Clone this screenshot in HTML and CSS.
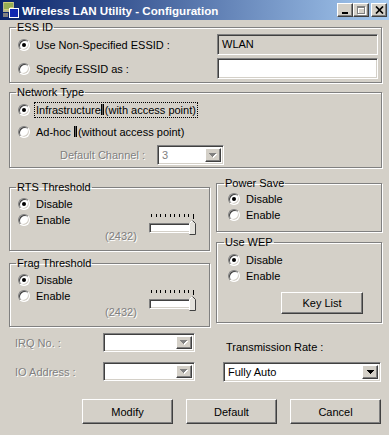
FILE: index.html
```html
<html>
<head>
  <title>Wireless LAN Utility - Configuration</title>
  <meta charset="UTF-8">
  <link rel="stylesheet" href="styles.css">
</head>
<body>
  <div class="titlebar">
    <svg class="app-icon" viewBox="0 0 16 16" width="16" height="16">
      <rect x="0" y="0" width="11" height="10" fill="#b8b890"/>
      <path d="M1 1h9M1 3h9M1 5h9M1 7h6" stroke="#e8e860" stroke-width="1"/>
      <path d="M1 2h9M1 4h9M1 6h6" stroke="#5a8a30" stroke-width="1"/>
      <rect x="6" y="6" width="10" height="10" fill="#fff"/>
      <rect x="7" y="7" width="8" height="8" fill="#1028b0"/>
      <rect x="0" y="11" width="5" height="4" fill="#808080"/>
    </svg>
    <span class="title">Wireless LAN Utility - Configuration</span>
    <div class="caption">
      <span class="cap-btn raised">
        <svg width="8" height="7"><rect x="1" y="5" width="6" height="2" fill="#000"/></svg>
      </span>
      <span class="cap-btn raised">
        <svg width="10" height="10">
          <path d="M2 2h8v8h-8z M3 4v5h6v-5z" fill="#fff" fill-rule="evenodd"/>
          <path d="M1 1h8v8h-8z M2 3v5h6v-5z" fill="#808080" fill-rule="evenodd"/>
        </svg>
      </span>
      <span class="cap-btn raised close">
        <svg width="9" height="8"><path d="M1 0.5L8 7.5M8 0.5L1 7.5" stroke="#000" stroke-width="1.7"/></svg>
      </span>
    </div>
  </div>

  <div class="content">
    <fieldset class="group ess">
      <legend>ESS ID</legend>
      <div class="ess-row">
        <label class="opt"><span class="radio on"></span>Use Non-Specified ESSID :</label>
        <div class="field readonly">WLAN</div>
      </div>
      <div class="ess-row">
        <label class="opt"><span class="radio"></span>Specify ESSID as :</label>
        <div class="field"></div>
      </div>
    </fieldset>

    <fieldset class="group net">
      <legend>Network Type</legend>
      <div class="net-row">
        <label class="opt"><span class="radio on"></span><span class="focus">Infrastructure<span class="tab"></span>(with access point)</span></label>
      </div>
      <div class="net-row">
        <label class="opt"><span class="radio"></span><span>Ad-hoc <span class="tab"></span>(without access point)</span></label>
      </div>
      <div class="chan-row">
        <span class="lbl dis">Default Channel :</span>
        <div class="combo chan">
          <span class="combo-text dis">3</span>
          <span class="drop raised">
            <svg width="8" height="5"><path d="M1 1h7v1h-1v1h-1v1h-1v1h-1v-1h-1v-1h-1v-1h-1z" fill="#fff"/><path d="M0 0h7v1h-1v1h-1v1h-1v1h-1v-1h-1v-1h-1v-1h-1z" fill="#808080"/></svg>
          </span>
        </div>
      </div>
    </fieldset>

    <div class="cols">
      <div class="col-left">
        <fieldset class="group thresh rts">
          <legend>RTS Threshold</legend>
          <div class="thresh-grid">
            <label class="opt r1"><span class="radio on"></span>Disable</label>
            <label class="opt r2"><span class="radio"></span>Enable</label>
            <span class="value dis">(2432)</span>
            <div class="slider">
              <div class="ticks"><i></i><i></i><i></i><i></i><i></i><i></i><i></i><i></i><i></i><i class="end"></i></div>
              <div class="track"></div>
              <svg class="thumb" width="7" height="15">
                <path d="M0.5 14.5V3.5L3.5 0.5L6.5 3.5V14.5Z" fill="#e4e2dc"/>
                <path d="M0.5 14.5V3.5L3.5 0.5" fill="none" stroke="#fff"/>
                <path d="M3.5 0.5L6.5 3.5V14.5H0.5" fill="none" stroke="#404040"/>
              </svg>
            </div>
          </div>
        </fieldset>

        <fieldset class="group thresh frag">
          <legend>Frag Threshold</legend>
          <div class="thresh-grid">
            <label class="opt r1"><span class="radio on"></span>Disable</label>
            <label class="opt r2"><span class="radio"></span>Enable</label>
            <span class="value dis">(2432)</span>
            <div class="slider">
              <div class="ticks"><i></i><i></i><i></i><i></i><i></i><i></i><i></i><i></i><i></i><i class="end"></i></div>
              <div class="track"></div>
              <svg class="thumb" width="7" height="15">
                <path d="M0.5 14.5V3.5L3.5 0.5L6.5 3.5V14.5Z" fill="#e4e2dc"/>
                <path d="M0.5 14.5V3.5L3.5 0.5" fill="none" stroke="#fff"/>
                <path d="M3.5 0.5L6.5 3.5V14.5H0.5" fill="none" stroke="#404040"/>
              </svg>
            </div>
          </div>
        </fieldset>
      </div>

      <div class="col-right">
        <fieldset class="group side power">
          <legend>Power Save</legend>
          <label class="opt"><span class="radio on"></span>Disable</label>
          <label class="opt"><span class="radio"></span>Enable</label>
        </fieldset>

        <fieldset class="group side wep">
          <legend>Use WEP</legend>
          <label class="opt"><span class="radio on"></span>Disable</label>
          <label class="opt"><span class="radio"></span>Enable</label>
          <button class="btn raised keylist">Key List</button>
        </fieldset>
      </div>
    </div>

    <div class="bottom">
      <div class="hw">
        <div class="hw-row">
          <span class="lbl dis">IRQ No. :</span>
          <div class="combo hw-combo">
            <span class="combo-text"></span>
            <span class="drop raised">
              <svg width="8" height="5"><path d="M1 1h7v1h-1v1h-1v1h-1v1h-1v-1h-1v-1h-1v-1h-1z" fill="#fff"/><path d="M0 0h7v1h-1v1h-1v1h-1v1h-1v-1h-1v-1h-1v-1h-1z" fill="#808080"/></svg>
            </span>
          </div>
        </div>
        <div class="hw-row">
          <span class="lbl dis">IO Address :</span>
          <div class="combo hw-combo">
            <span class="combo-text"></span>
            <span class="drop raised">
              <svg width="8" height="5"><path d="M1 1h7v1h-1v1h-1v1h-1v1h-1v-1h-1v-1h-1v-1h-1z" fill="#fff"/><path d="M0 0h7v1h-1v1h-1v1h-1v1h-1v-1h-1v-1h-1v-1h-1z" fill="#808080"/></svg>
            </span>
          </div>
        </div>
      </div>
      <div class="rate">
        <div class="rate-lbl">Transmission Rate :</div>
        <div class="combo rate-combo">
          <span class="combo-text">Fully Auto</span>
          <span class="drop raised">
            <svg width="7" height="4"><path d="M0 0h7v1h-1v1h-1v1h-1v1h-1v-1h-1v-1h-1v-1h-1z" fill="#000"/></svg>
          </span>
        </div>
      </div>
    </div>

    <div class="actions">
      <button class="btn raised">Modify</button>
      <button class="btn raised">Default</button>
      <button class="btn raised">Cancel</button>
    </div>
  </div>
</body>
</html>
```

FILE: styles.css
```css
* {
  box-sizing: border-box;
}
body {
  margin: 0;
  width: 389px;
  height: 435px;
  overflow: hidden;
  background: #d4d0c8;
  font-family: "Liberation Sans", Arial, sans-serif;
  font-size: 11px;
  color: #000;
}
.raised {
  background: #d4d0c8;
  border: 1px solid;
  border-color: #fff #404040 #404040 #fff;
  box-shadow: inset -1px -1px 0 #808080, inset 1px 1px 0 #d4d0c8;
}
.dis {
  color: #808080;
  text-shadow: 1px 1px 0 #fff;
}

/* title bar */
.titlebar {
  height: 20px;
  display: flex;
  align-items: center;
  padding: 0 2px 0 3px;
  background: linear-gradient(to right, #0a246a, #a6caf0);
}
.app-icon {
  flex: none;
}
.title {
  flex: 1;
  margin-left: 3px;
  color: #fff;
  font-weight: bold;
  font-size: 11.6px;
  white-space: nowrap;
}
.caption {
  display: flex;
}
.cap-btn {
  width: 16px;
  height: 14px;
  display: flex;
  align-items: center;
  justify-content: center;
}
.cap-btn.close {
  margin-left: 2px;
}

/* groups */
.content {
  padding: 0 7px 0 9px;
}
.group {
  margin: 0;
  min-width: 0;
  padding: 0 3px 0 8px;
  border: 1px solid #808080;
  box-shadow: 1px 1px 0 #fff, inset 1px 1px 0 #fff;
}
.group legend {
  padding: 0 1px;
  margin-left: -2px;
  line-height: 13px;
}
.opt {
  display: flex;
  align-items: center;
  gap: 6px;
  height: 16px;
  white-space: nowrap;
}
.radio {
  flex: none;
  width: 12px;
  height: 12px;
  border-radius: 50%;
  background: #fff;
  border: 1px solid;
  border-color: #808080 #fff #fff #808080;
  box-shadow: inset 1px 1px 0 #404040, inset -1px -1px 0 #d4d0c8;
  display: flex;
  align-items: center;
  justify-content: center;
}
.radio.on::after {
  content: "";
  width: 4px;
  height: 4px;
  border-radius: 50%;
  background: #000;
}
.tab {
  display: inline-block;
  width: 3px;
  height: 11px;
  margin: 0 1px -1px 0;
  border-left: 1px solid #000;
  border-right: 1px solid #000;
  background: #606060;
}

/* ESS ID */
.ess {
  margin-top: 1px;
  padding-bottom: 3px;
}
.ess-row {
  display: flex;
  justify-content: space-between;
  align-items: center;
  height: 21px;
}
.ess-row + .ess-row {
  margin-top: 3px;
}
.field {
  width: 161px;
  height: 21px;
  padding: 3px 4px;
  line-height: 13px;
  background: #fff;
  border: 1px solid;
  border-color: #808080 #fff #fff #808080;
  box-shadow: inset 1px 1px 0 #404040, inset -1px -1px 0 #d4d0c8;
}
.field.readonly {
  background: #d4d0c8;
}

/* network type */
.net {
  margin-top: 3px;
  padding-bottom: 2px;
}
.net-row {
  display: flex;
  align-items: center;
  height: 22px;
}
.focus {
  margin-left: -2px;
  padding: 1px 1px;
  line-height: 12px;
  border: 1px dotted #000;
}
.chan-row {
  display: flex;
  align-items: center;
  height: 20px;
  margin-top: 2px;
  padding-left: 42px;
}
.chan-row .lbl {
  width: 97px;
}
.combo {
  display: flex;
  height: 20px;
  padding: 2px;
  background: #fff;
  border: 1px solid;
  border-color: #808080 #fff #fff #808080;
  box-shadow: inset 1px 1px 0 #404040, inset -1px -1px 0 #d4d0c8;
}
.combo-text {
  flex: 1;
  padding-left: 2px;
  line-height: 14px;
  white-space: nowrap;
}
.drop {
  width: 16px;
  flex: none;
  display: flex;
  align-items: center;
  justify-content: center;
}
.chan {
  width: 67px;
}

/* two columns */
.cols {
  display: flex;
  align-items: flex-start;
  gap: 6px;
}
.col-left {
  width: 201px;
}
.col-right {
  width: 166px;
}
.thresh {
  padding: 2px 0 8px 8px;
}
.rts {
  margin-top: 13px;
}
.frag {
  margin-top: 6px;
}
.thresh-grid {
  display: grid;
  grid-template-columns: 87px 44px 46px;
  grid-template-rows: 16px 16px 14px;
}
.r1 {
  grid-column: 1 / 3;
  grid-row: 1;
}
.r2 {
  grid-column: 1 / 3;
  grid-row: 2;
}
.value {
  grid-column: 2;
  grid-row: 3;
  align-self: end;
  line-height: 12px;
}
.slider {
  grid-column: 3;
  grid-row: 2 / 4;
  position: relative;
  margin-top: 2px;
}
.ticks {
  display: flex;
  justify-content: space-between;
  align-items: flex-start;
  width: 43px;
  height: 5px;
  margin-left: 2px;
}
.ticks i {
  width: 1px;
  height: 3px;
  background: #000;
}
.ticks i.end {
  height: 5px;
}
.track {
  width: 45px;
  height: 10px;
  margin-top: 4px;
  background: #fff;
  border: 1px solid;
  border-color: #808080 #fff #fff #808080;
  box-shadow: inset 1px 1px 0 #404040, inset -1px -1px 0 #d4d0c8;
}
.thumb {
  position: absolute;
  left: 40px;
  top: 6px;
}
.side {
  padding: 1px 3px 8px 11px;
}
.side legend {
  margin-left: -4px;
}
.power {
  margin-top: 9px;
}
.wep {
  margin-top: 4px;
  padding-top: 3px;
}
.btn {
  font: inherit;
  color: #000;
  padding: 0;
}
.keylist {
  display: block;
  width: 82px;
  height: 22px;
  margin: 8px 0 0 53px;
}

/* bottom */
.bottom {
  display: flex;
  gap: 6px;
  margin-top: 6px;
}
.hw {
  width: 201px;
}
.hw-row {
  display: flex;
  align-items: center;
  height: 19px;
  padding-left: 6px;
}
.hw-row + .hw-row {
  margin-top: 10px;
}
.hw-row .lbl {
  width: 88px;
}
.hw-combo {
  width: 92px;
  height: 19px;
}
.rate {
  padding-left: 7px;
}
.rate-lbl {
  margin-top: 8px;
  padding-left: 3px;
  line-height: 13px;
}
.rate-combo {
  width: 158px;
  margin-top: 8px;
}
.actions {
  display: flex;
  justify-content: flex-end;
  gap: 13px;
  margin-top: 17px;
  padding-right: 1px;
}
.actions .btn {
  width: 91px;
  height: 25px;
}
```
